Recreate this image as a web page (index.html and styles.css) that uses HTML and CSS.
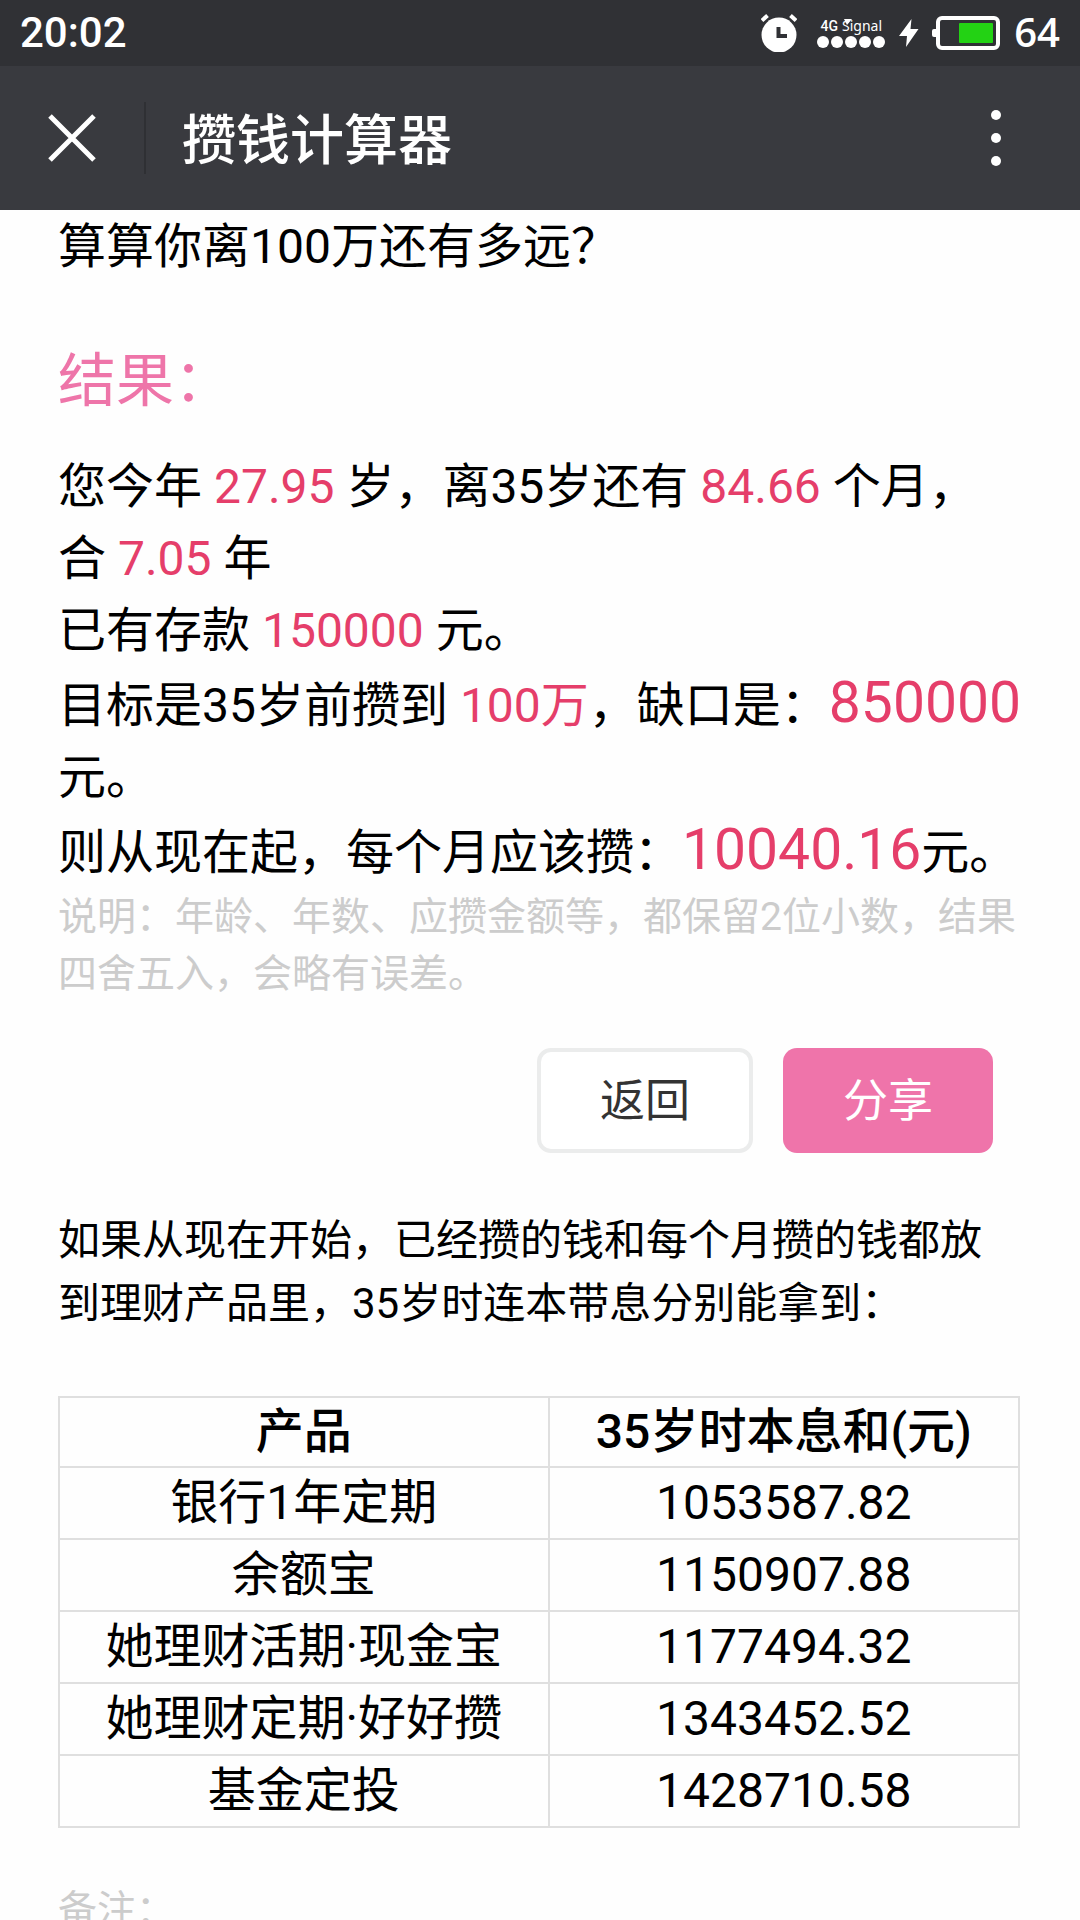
FILE: index.html
```
<!DOCTYPE html>
<html lang="zh-CN">
<head>
  <meta charset="utf-8">
  <meta name="viewport" content="width=device-width">
  <title>攒钱计算器</title>
  <link rel="stylesheet" href="styles.css">
</head>
<body>
  <div class="statusbar">
    <span class="time">20:02</span>
    <div class="status-icons">
      <svg class="alarm" width="36" height="38" viewBox="0 0 36 38">
        <path d="M1 6.500L6.500 1.500M35 6.500L29.500 1.500" stroke="#fff" stroke-width="4"/>
        <circle cx="18" cy="21" r="17.500" fill="#fff"/>
        <path d="M17.500 13V22H26" fill="none" stroke="#303135" stroke-width="4"/>
      </svg>
      <div class="signal">
        <div class="signal-text"><b>4G</b><span>Signal</span></div>
        <svg width="68" height="12" viewBox="0 0 68 12" fill="#fff">
          <circle cx="6" cy="6" r="6"/>
          <circle cx="20" cy="6" r="6"/>
          <circle cx="34" cy="6" r="6"/>
          <circle cx="48" cy="6" r="6"/>
          <circle cx="62" cy="6" r="6"/>
        </svg>
        <svg class="signal-mark" width="8" height="6" viewBox="0 0 8 6"><path d="M0 0H8L3 6Z" fill="#fff"/></svg>
      </div>
      <svg class="bolt" width="20" height="28" viewBox="0 0 20 28">
        <path d="M12.500 0L0 17H8L7 28L19.500 10H11.500Z" fill="#fff"/>
      </svg>
      <svg class="battery" width="68" height="34" viewBox="0 0 68 34">
        <rect x="0" y="13" width="6" height="8" rx="2" fill="#fff"/>
        <rect x="6" y="2" width="60" height="30" rx="4" fill="none" stroke="#fff" stroke-width="4"/>
        <rect x="27" y="7" width="34" height="20" rx="1" fill="#23d214"/>
      </svg>
      <span class="percent">64</span>
    </div>
  </div>

  <header class="navbar">
    <button class="close" aria-label="关闭">
      <svg width="48" height="48" viewBox="0 0 48 48"><path d="M2 2L46 46M46 2L2 46" stroke="#fff" stroke-width="5"/></svg>
    </button>
    <h1 class="title">攒钱计算器</h1>
    <button class="more" aria-label="更多">
      <svg width="10" height="56" viewBox="0 0 10 56" fill="#fff">
        <circle cx="5" cy="5" r="5"/>
        <circle cx="5" cy="28" r="5"/>
        <circle cx="5" cy="51" r="5"/>
      </svg>
    </button>
  </header>

  <main class="content">
    <p>算算你离100万还有多远？</p>
    <h2>结果：</h2>
    <div class="result">
      <p>您今年 <em>27.95</em> 岁，离35岁还有 <em>84.66</em> 个月，<br>合 <em>7.05</em> 年</p>
      <p>已有存款 <em>150000</em> 元。</p>
      <p>目标是35岁前攒到 <em>100万</em>，缺口是：<em class="big">850000</em> 元。</p>
      <p>则从现在起，每个月应该攒：<em class="big">10040.16</em>元。</p>
    </div>
    <p class="note">说明：年龄、年数、应攒金额等，都保留2位小数，结果四舍五入，会略有误差。</p>

    <div class="actions">
      <button class="btn">返回</button>
      <button class="btn btn-share">分享</button>
    </div>

    <p class="intro">如果从现在开始，已经攒的钱和每个月攒的钱都放到理财产品里，35岁时连本带息分别能拿到：</p>

    <table>
      <thead>
        <tr><th class="product">产品</th><th>35岁时本息和(元)</th></tr>
      </thead>
      <tbody>
        <tr><td>银行1年定期</td><td>1053587.82</td></tr>
        <tr><td>余额宝</td><td>1150907.88</td></tr>
        <tr><td>她理财活期·现金宝</td><td>1177494.32</td></tr>
        <tr><td>她理财定期·好好攒</td><td>1343452.52</td></tr>
        <tr><td>基金定投</td><td>1428710.58</td></tr>
      </tbody>
    </table>

    <p class="note">备注：</p>
  </main>
</body>
</html>
```

FILE: styles.css
```
* {
  box-sizing: border-box;
}
body {
  margin: 0;
  height: 100vh;
  display: flex;
  flex-direction: column;
  overflow: hidden;
  background-color: #fefefe;
  color: #000;
  font-family: Roboto, "Noto Sans CJK SC", sans-serif;
  font-size: 48px;
  line-height: 72px;
}
p, h1, h2 {
  margin: 0;
}
button {
  font-family: inherit;
  cursor: pointer;
}
svg {
  display: block;
}

/* phone status bar */
.statusbar {
  flex: none;
  display: flex;
  align-items: center;
  justify-content: space-between;
  height: 66px;
  padding: 0 20px;
  background-color: #303135;
  color: #fff;
  line-height: 48px;
}
.time {
  font-size: 42px;
  font-weight: 500;
}
.status-icons {
  display: flex;
  align-items: center;
}
.signal {
  position: relative;
  margin: 0 14px 0 20px;
}
.signal-text {
  display: flex;
  justify-content: center;
  gap: 4px;
  height: 18px;
  font-size: 14px;
  line-height: 16px;
}
.signal-text b {
  font-weight: 500;
}
.signal-text span {
  font-family: "Noto Sans", sans-serif;
}
.signal-mark {
  position: absolute;
  top: 1px;
  left: 27px;
}
.battery {
  margin: 0 14px 0 13px;
}
.percent {
  padding-bottom: 3px;
  font-family: "Open Sans", "Noto Sans", sans-serif;
  font-size: 40px;
  font-weight: 600;
}

/* title bar */
.navbar {
  flex: none;
  display: flex;
  align-items: center;
  height: 144px;
  background-color: #393a3f;
  color: #fff;
}
.navbar button {
  padding: 0;
  border: none;
  background: none;
}
.navbar .close {
  display: flex;
  align-items: center;
  justify-content: center;
  width: 146px;
  height: 72px;
  border-right: 2px solid #2f3034;
}
.title {
  flex: 1;
  padding: 8px 0 0 36px;
  font-size: 54px;
  font-weight: 500;
}
.navbar .more {
  padding: 0 79px;
}

.content {
  flex: 1;
  overflow-y: auto;
  scrollbar-width: none;
  padding: 1px 58px 0;
}
h2 {
  margin: 54px 0 26px;
  color: #ee75a9;
  font-size: 58px;
  font-weight: 400;
  line-height: 88px;
}
em {
  color: #e53e6a;
  font-style: normal;
}
.big {
  font-size: 57px;
}
.note {
  color: #ccc;
  font-size: 39px;
  line-height: 57px;
}

.actions {
  display: flex;
  justify-content: flex-end;
  gap: 30px;
  margin: 45px 29px 56px 0;
}
.btn {
  width: 216px;
  height: 105px;
  padding: 0 0 6px;
  border: 4px solid #ebecec;
  border-radius: 14px;
  background-color: #fff;
  color: #333;
  font-size: 45px;
}
.btn-share {
  width: 210px;
  border: none;
  background-color: #ef74aa;
  color: #fff;
}

.intro {
  margin-bottom: 61px;
  font-size: 42px;
  line-height: 63px;
}
table {
  width: calc(100% - 2px);
  margin-bottom: 54px;
  border-collapse: collapse;
  text-align: center;
}
th, td {
  padding: 0;
  border: 2px solid #dfdfdf;
  line-height: 70px;
}
th {
  font-weight: 500;
  line-height: 68px;
}
.product {
  width: 51%;
}
```
